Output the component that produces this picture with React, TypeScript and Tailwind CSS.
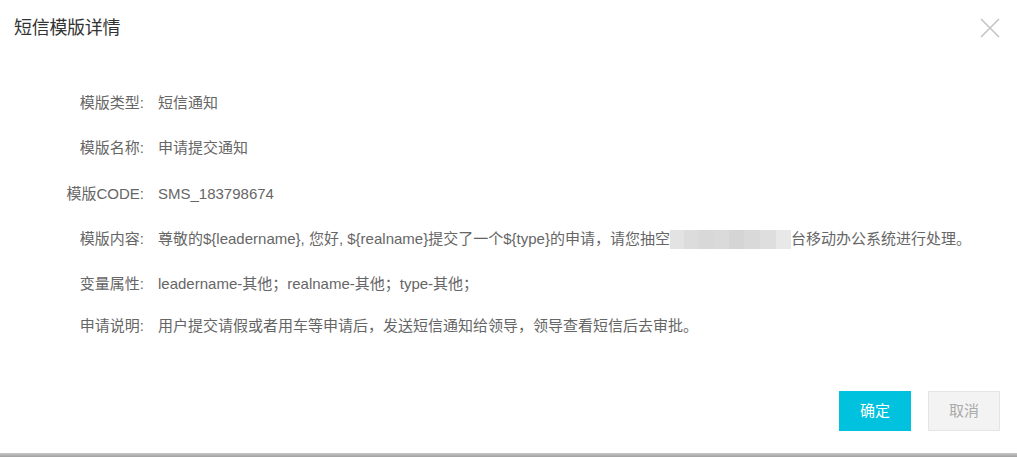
import React from 'react';

const font = { fontFamily: '"Liberation Sans", Arial, "Noto Sans CJK SC", sans-serif' };

const rows: { label: string; value: React.ReactNode; h: string }[] = [
  { label: '模版类型:', value: '短信通知', h: 'h-[46px]' },
  { label: '模版名称:', value: '申请提交通知', h: 'h-[45px]' },
  { label: '模版CODE:', value: 'SMS_183798674', h: 'h-[46px]' },
  {
    label: '模版内容:',
    value: (
      <span className="relative inline-flex items-center">
        尊敬的${'{leadername}'}, 您好, ${'{realname}'}提交了一个${'{type}'}的申请，请您抽空
        <span className="inline-flex h-[19px] w-[121px]">
          <span className="w-[14px] bg-[#e3e3e3]" />
          <span className="w-[15px] bg-[#dcdcdc]" />
          <span className="w-[15px] bg-[#d8d8d8]" />
          <span className="w-[15px] bg-[#dadada]" />
          <span className="w-[15px] bg-[#d5d5d5]" />
          <span className="w-[16px] bg-[#d9d9d9]" />
          <span className="w-[16px] bg-[#dedede]" />
          <span className="w-[15px] bg-[#e8e8e8]" />
        </span>
        台移动办公系统进行处理。
      </span>
    ),
    h: 'h-[45px]',
  },
  { label: '变量属性:', value: 'leadername-其他；realname-其他；type-其他；', h: 'h-[44px]' },
  { label: '申请说明:', value: '用户提交请假或者用车等申请后，发送短信通知给领导，领导查看短信后去审批。', h: 'h-[40px]' },
];

export default function App() {
  return (
    <div className="w-[1017px] h-[457px] bg-white flex flex-col text-[#666]" style={font}>
      <div className="h-[56px] flex items-center justify-between pl-[14px] pr-[17px]">
        <h2 className="text-[18px] text-[#333] tracking-[-0.3px]">短信模版详情</h2>
        <svg width="20" height="20" viewBox="0 0 20 20">
          <path d="M1 1L19 19M19 1L1 19" stroke="#c4c4c4" strokeWidth="1.6" />
        </svg>
      </div>
      <div className="pt-[24px] flex flex-col">
        {rows.map((r) => (
          <div key={r.label} className={`flex items-center text-[15px] ${r.h}`}>
            <div className="w-[144px] text-right shrink-0">{r.label}</div>
            <div className="pl-[14px] whitespace-nowrap">{r.value}</div>
          </div>
        ))}
      </div>
      <div className="flex-1" />
      <div className="flex justify-end gap-[17px] pr-[17px] pb-[22px]">
        <button className="w-[72px] h-[40px] bg-[#00c1de] text-white text-[15px]">确定</button>
        <button className="w-[72px] h-[40px] bg-[#f3f3f3] border border-[#e5e5e5] text-[#aaa] text-[15px]">取消</button>
      </div>
      <div className="h-[4px] bg-gradient-to-b from-[#c8c8c8] to-[#a0a0a0]" />
    </div>
  );
}
